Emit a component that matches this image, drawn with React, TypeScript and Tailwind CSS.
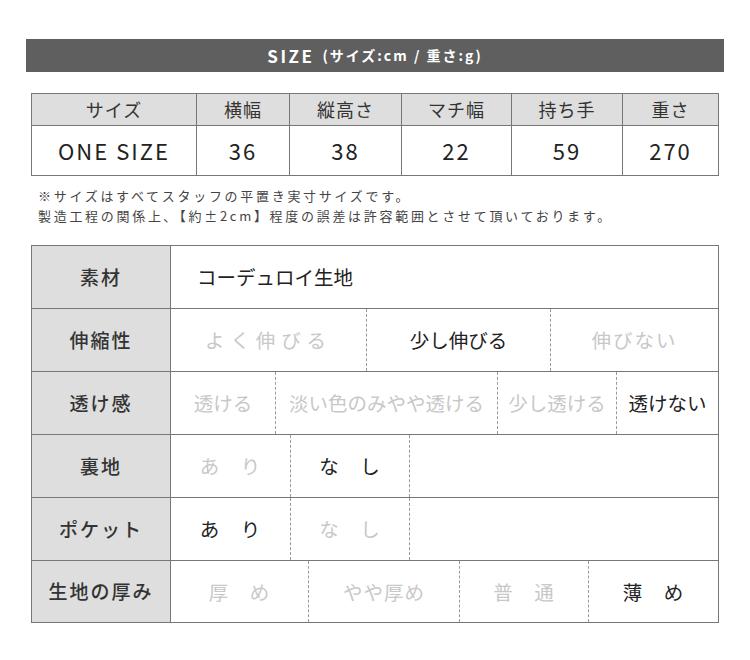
const JP = "font-['Noto_Sans_CJK_JP','Noto_Sans',sans-serif]";

type Cell = { text: string; w: number; on?: boolean; cls?: string };

const sizeCols = [
  { head: "サイズ", val: "ONE SIZE", w: 164 },
  { head: "横幅", val: "36", w: 93 },
  { head: "縦高さ", val: "38", w: 112 },
  { head: "マチ幅", val: "22", w: 110 },
  { head: "持ち手", val: "59", w: 111 },
  { head: "重さ", val: "270", w: 96 },
];

const specRows: { label: string; cells: Cell[] }[] = [
  { label: "伸縮性", cells: [
    { text: "よく伸びる", w: 195, cls: "tracking-[0.3em]" },
    { text: "少し伸びる", w: 184, on: true },
    { text: "伸びない", w: 168, cls: "tracking-[2px]" },
  ] },
  { label: "透け感", cells: [
    { text: "透ける", w: 104 },
    { text: "淡い色のみやや透ける", w: 222 },
    { text: "少し透ける", w: 119 },
    { text: "透けない", w: 102, on: true },
  ] },
  { label: "裏地", cells: [
    { text: "あ　り", w: 119, cls: "tracking-[1px]" },
    { text: "な　し", w: 119, on: true, cls: "tracking-[1px]" },
    { text: "", w: 309 },
  ] },
  { label: "ポケット", cells: [
    { text: "あ　り", w: 119, on: true, cls: "tracking-[1px]" },
    { text: "な　し", w: 119, cls: "tracking-[1px]" },
    { text: "", w: 309 },
  ] },
  { label: "生地の厚み", cells: [
    { text: "厚　め", w: 137, cls: "tracking-[1px]" },
    { text: "やや厚め", w: 151, cls: "tracking-[1px]" },
    { text: "普　通", w: 129, cls: "tracking-[1px]" },
    { text: "薄　め", w: 130, on: true, cls: "tracking-[1px]" },
  ] },
];

export default function App() {
  return (
    <div className={`${JP} w-[750px] h-[660px] bg-white pt-[39px] pl-[26px]`}>
      {/* title bar */}
      <div className="w-[698px] h-[33px] bg-[#5f5f5f] flex items-center justify-center text-white font-bold">
        <span className="text-[17px] tracking-[2.5px]">SIZE</span>
        <span className="ml-[8px] text-[14px] tracking-[2px]">(サイズ:cm / 重さ:g)</span>
      </div>

      {/* size table */}
      <div className="ml-[5px] mt-[21px] w-[688px] border border-[#777] text-[#333]">
        <div className="flex h-[32px] bg-[#dedede] border-b border-[#777]">
          {sizeCols.map((c, i) => (
            <div
              key={c.head}
              className={`flex items-center justify-center text-[18px] tracking-[1px] ${i > 0 ? "border-l border-[#777]" : ""}`}
              style={{ width: c.w }}
            >
              {c.head}
            </div>
          ))}
        </div>
        <div className="flex h-[49px]">
          {sizeCols.map((c, i) => (
            <div
              key={c.head}
              className={`flex items-center justify-center text-[22px] tracking-[2px] text-[#222] ${i > 0 ? "border-l border-[#777]" : ""}`}
              style={{ width: c.w }}
            >
              {c.val}
            </div>
          ))}
        </div>
      </div>

      {/* notes */}
      <div className="ml-[12px] mt-[10px] text-[13px] leading-[20px] tracking-[2.7px] text-[#444]">
        <p>※サイズはすべてスタッフの平置き実寸サイズです。</p>
        <p>製造工程の関係上､【約±2cm】程度の誤差は許容範囲とさせて頂いております。</p>
      </div>

      {/* spec table */}
      <div className="ml-[5px] mt-[19px] w-[688px] border border-[#777]">
        <div className="flex h-[63px] border-b border-[#777]">
          <div className="w-[139px] shrink-0 bg-[#dedede] border-r border-[#777] flex items-center justify-center text-[19px] font-medium tracking-[2px] text-[#333]">
            素材
          </div>
          <div className="flex items-center pl-[26px] text-[19.5px] text-[#222]">コーデュロイ生地</div>
        </div>
        {specRows.map((r, ri) => (
          <div
            key={r.label}
            className={`flex ${ri === specRows.length - 1 ? "h-[61px]" : "h-[63px] border-b border-[#777]"}`}
          >
            <div className="w-[139px] shrink-0 bg-[#dedede] border-r border-[#777] flex items-center justify-center text-[19px] font-medium tracking-[2px] text-[#333]">
              {r.label}
            </div>
            {r.cells.map((c, ci) => (
              <div
                key={ci}
                className={`shrink-0 flex items-center justify-center text-[19.5px] ${c.on ? "text-[#222]" : "text-[#c8c8c8]"} ${ci > 0 ? "border-l border-dashed border-[#999]" : ""} ${c.cls ?? ""}`}
                style={{ width: c.w }}
              >
                {c.text}
              </div>
            ))}
          </div>
        ))}
      </div>
    </div>
  );
}
